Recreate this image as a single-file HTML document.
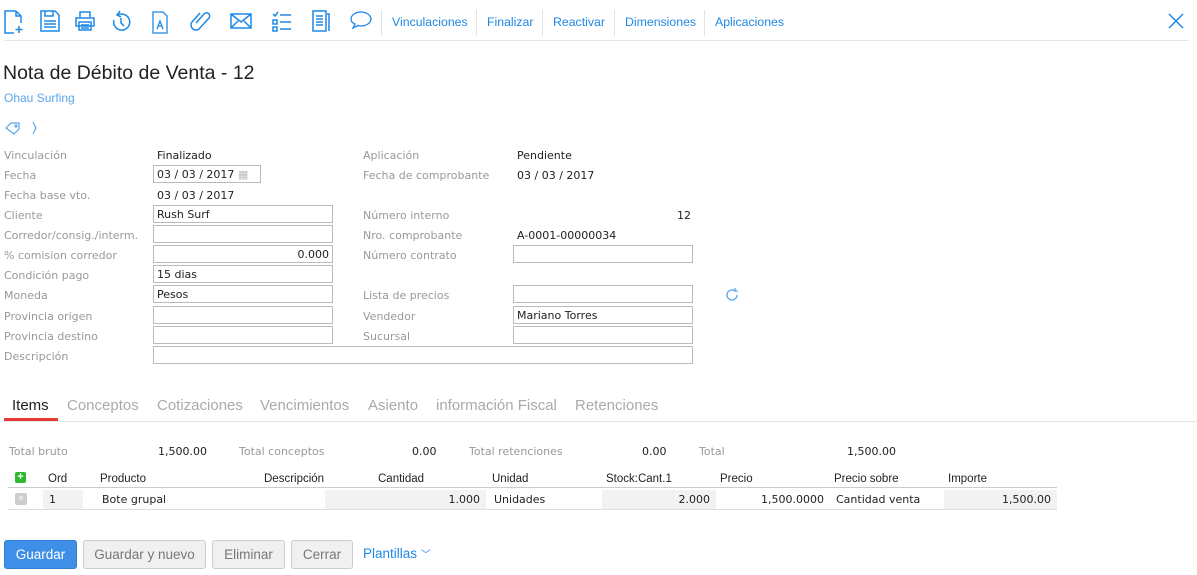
<!DOCTYPE html>
<html><head><meta charset="utf-8"><style>
body{margin:0;width:1197px;height:575px;background:#fff;position:relative;overflow:hidden;font-family:"Liberation Sans",sans-serif}
.a{position:absolute;white-space:nowrap}
.ic{position:absolute;top:10px}
.tb{position:absolute;top:15px;font-size:12.3px;color:#1e88e5}
.sep{position:absolute;top:10px;width:1px;height:26px;background:#e3e3e3}
.l{position:absolute;font-family:"DejaVu Sans",sans-serif;font-size:11px;color:#999;white-space:nowrap}
.v{position:absolute;font-family:"DejaVu Sans",sans-serif;font-size:11px;color:#222;white-space:nowrap}
.in{position:absolute;border:1px solid #bbb;font-family:"DejaVu Sans",sans-serif;font-size:11px;color:#222;line-height:17px;padding:0 3px;box-sizing:border-box;width:180px;height:18px}
.tab{position:absolute;top:397px;font-size:15px;color:#aaa}
.th{position:absolute;top:473px;font-size:11.5px;color:#222}
.td{position:absolute;top:490px;height:19px;line-height:19px;font-family:"DejaVu Sans",sans-serif;font-size:11px;color:#222;box-sizing:border-box;padding:0 6px}
.btn{position:absolute;top:540px;height:29px;line-height:27px;box-sizing:border-box;border:1px solid #ccc;border-radius:3px;background:#f0f0f0;color:#777;font-size:13.5px;text-align:center}
</style></head><body>
<svg class="ic" style="left:4px" width="20" height="24" viewBox="0 0 20 24" fill="none" stroke="#1e88e5" stroke-width="1.5"><path d="M12 1H1v22h9M12 1l5 5v7M12 1v5h5"/><path d="M15 16v7M11.5 19.5h7"/></svg>
<svg class="ic" style="left:40px" width="20" height="22" viewBox="0 0 20 22" fill="none" stroke="#1e88e5" stroke-width="1.5"><path d="M1 1h14l4 4v16H1z"/><path d="M5 1v5h8V1M4 11h12M4 14h12M4 17h12"/></svg>
<svg class="ic" style="left:75px" width="20" height="22" viewBox="0 0 20 22" fill="none" stroke="#1e88e5" stroke-width="1.5"><path d="M5 7V2h10v5M1 8h18v8H1zM4 12h12v8H4zM6 15h8M6 18h8"/></svg>
<svg class="ic" style="left:111px" width="20" height="22" viewBox="0 0 20 22" fill="none" stroke="#1e88e5" stroke-width="1.5"><path d="M7 5a8 8 0 1 1-4 5"/><path d="M9 1L6 5l4 2M10 8v5l3 3"/></svg>
<svg class="ic" style="left:152px" width="16" height="24" viewBox="0 0 16 24" fill="none" stroke="#1e88e5" stroke-width="1.3"><path d="M1 2h10l4 4v17H1z"/><path d="M5 19l3-8 3 8M6 16h4"/></svg>
<svg class="ic" style="left:190px" width="22" height="22" viewBox="0 0 22 22" fill="none" stroke="#1e88e5" stroke-width="1.5"><path d="M6 13l8-9a3 3 0 0 1 5 4l-10 11a5 5 0 0 1-7-7l8-9"/></svg>
<svg class="ic" style="left:230px;top:13px" width="22" height="16" viewBox="0 0 22 16" fill="none" stroke="#1e88e5" stroke-width="1.5"><path d="M1 1h20v14H1zM1 1l10 8 10-8M1 15l7-7M21 15l-7-7"/></svg>
<svg class="ic" style="left:272px" width="20" height="22" viewBox="0 0 20 22" fill="none" stroke="#1e88e5" stroke-width="1.5"><path d="M1 4l2 2 3-4M1 10h4v4H1zM1 17h4v4H1zM8 5h11M8 12h11M8 19h11"/></svg>
<svg class="ic" style="left:312px" width="18" height="22" viewBox="0 0 18 22" fill="none" stroke="#1e88e5" stroke-width="1.5"><path d="M1 1h13v20H1z"/><path d="M4 6h7M4 9h7M4 12h7M4 15h7" /><path d="M15 4h2v17" /></svg>
<svg class="ic" style="left:350px" width="22" height="20" viewBox="0 0 22 20" fill="none" stroke="#1e88e5" stroke-width="1.3"><path d="M11 2c5 0 10 3 10 7s-5 7-10 7c-1 0-2 0-3-.5L3 18l2-4C2 13 1 11 1 9c0-4 5-7 10-7z"/></svg>
<div class="sep" style="left:381px"></div>
<div class="tb" style="left:392px">Vinculaciones</div>
<div class="sep" style="left:476px"></div>
<div class="tb" style="left:487px">Finalizar</div>
<div class="sep" style="left:542px"></div>
<div class="tb" style="left:553px">Reactivar</div>
<div class="sep" style="left:614px"></div>
<div class="tb" style="left:625px">Dimensiones</div>
<div class="sep" style="left:704px"></div>
<div class="tb" style="left:715px">Aplicaciones</div>
<svg class="a" style="left:1168px;top:13px" width="16" height="16" viewBox="0 0 16 16" stroke="#1e88e5" stroke-width="1.5"><path d="M1 1l14 14M15 1L1 15"/></svg>
<div class="a" style="left:4px;top:40px;width:1185px;height:1px;background:#e5e5e5"></div>
<div class="a" style="left:3px;top:62px;font-size:19.5px;color:#222">Nota de Débito de Venta - 12</div>
<div class="a" style="left:4px;top:91px;font-size:12px;color:#5aa6ea">Ohau Surfing</div>
<svg class="a" style="left:5px;top:120px" width="34" height="15" viewBox="0 0 34 15" fill="none" stroke="#5aa6ea" stroke-width="1.2"><path d="M1 8l5-5h8v6l-5 5z"/><circle cx="11" cy="6" r="1"/><path d="M28 2l3 6-3 6"/></svg>

<div class="l" style="left:4px;top:149px">Vinculación</div><div class="v" style="left:157px;top:149px">Finalizado</div>
<div class="l" style="left:4px;top:169px">Fecha</div><div class="in" style="left:153px;top:165px;width:108px">03 / 03 / 2017 <span style="color:#bbb">▦</span></div>
<div class="l" style="left:4px;top:189px">Fecha base vto.</div><div class="v" style="left:157px;top:189px">03 / 03 / 2017</div>
<div class="l" style="left:4px;top:209px">Cliente</div><div class="in" style="left:153px;top:205px">Rush Surf</div>
<div class="l" style="left:4px;top:229px">Corredor/consig./interm.</div><div class="in" style="left:153px;top:225px"></div>
<div class="l" style="left:4px;top:249px">% comision corredor</div><div class="in" style="left:153px;top:245px;text-align:right">0.000</div>
<div class="l" style="left:4px;top:269px">Condición pago</div><div class="in" style="left:153px;top:265px">15 dias</div>
<div class="l" style="left:4px;top:289px">Moneda</div><div class="in" style="left:153px;top:285px">Pesos</div>
<div class="l" style="left:4px;top:310px">Provincia origen</div><div class="in" style="left:153px;top:306px"></div>
<div class="l" style="left:4px;top:330px">Provincia destino</div><div class="in" style="left:153px;top:326px"></div>
<div class="l" style="left:4px;top:350px">Descripción</div><div class="in" style="left:153px;top:346px;width:540px"></div>

<div class="l" style="left:363px;top:149px">Aplicación</div><div class="v" style="left:517px;top:149px">Pendiente</div>
<div class="l" style="left:363px;top:169px">Fecha de comprobante</div><div class="v" style="left:517px;top:169px">03 / 03 / 2017</div>
<div class="l" style="left:363px;top:209px">Número interno</div><div class="v" style="left:677px;top:209px">12</div>
<div class="l" style="left:363px;top:229px">Nro. comprobante</div><div class="v" style="left:517px;top:229px">A-0001-00000034</div>
<div class="l" style="left:363px;top:249px">Número contrato</div><div class="in" style="left:513px;top:245px"></div>
<div class="l" style="left:363px;top:289px">Lista de precios</div><div class="in" style="left:513px;top:285px"></div>
<svg class="a" style="left:725px;top:288px" width="14" height="14" viewBox="0 0 14 14" fill="none" stroke="#5aa6ea" stroke-width="1.3"><path d="M12 7a5 5 0 1 1-2-4M10 0v3h3"/></svg>
<div class="l" style="left:363px;top:310px">Vendedor</div><div class="in" style="left:513px;top:306px">Mariano Torres</div>
<div class="l" style="left:363px;top:330px">Sucursal</div><div class="in" style="left:513px;top:326px"></div>

<div class="tab" style="left:12px;color:#222">Items</div>
<div class="a" style="left:4px;top:418px;width:54px;height:3px;background:#e53935"></div>
<div class="a" style="left:4px;top:421px;width:1193px;height:1px;background:#e5e5e5"></div>
<div class="tab" style="left:67px">Conceptos</div>
<div class="tab" style="left:157px">Cotizaciones</div>
<div class="tab" style="left:260px">Vencimientos</div>
<div class="tab" style="left:368px">Asiento</div>
<div class="tab" style="left:436px">información Fiscal</div>
<div class="tab" style="left:575px">Retenciones</div>

<div class="l" style="left:9px;top:445px">Total bruto</div><div class="v" style="left:158px;top:445px">1,500.00</div>
<div class="l" style="left:239px;top:445px">Total conceptos</div><div class="v" style="left:412px;top:445px">0.00</div>
<div class="l" style="left:469px;top:445px">Total retenciones</div><div class="v" style="left:642px;top:445px">0.00</div>
<div class="l" style="left:699px;top:445px">Total</div><div class="v" style="left:847px;top:445px">1,500.00</div>

<div class="a" style="left:15px;top:472px;width:11px;height:11px;background:#2eb82e;border-radius:2px;color:#fff;font-size:11px;line-height:11px;text-align:center;font-weight:bold">+</div>
<div class="th" style="left:48px">Ord</div><div class="th" style="left:100px">Producto</div><div class="th" style="left:264px">Descripción</div><div class="th" style="left:378px">Cantidad</div><div class="th" style="left:492px">Unidad</div><div class="th" style="left:606px">Stock:Cant.1</div><div class="th" style="left:720px">Precio</div><div class="th" style="left:834px">Precio sobre</div><div class="th" style="left:948px">Importe</div>
<div class="a" style="left:8px;top:487px;width:1049px;height:1px;background:#ccc"></div>
<div class="a" style="left:8px;top:509px;width:1049px;height:1px;background:#ddd"></div>
<div class="a" style="left:15px;top:493px;width:12px;height:12px;background:#ccc;border-radius:2px;color:#fff;font-size:10px;line-height:12px;text-align:center">×</div>
<div class="td" style="left:43px;width:40px;background:#f2f2f2">1</div>
<div class="td" style="left:96px;width:230px">Bote grupal</div>
<div class="td" style="left:325px;width:161px;background:#f2f2f2;text-align:right">1.000</div>
<div class="td" style="left:488px;width:114px">Unidades</div>
<div class="td" style="left:602px;width:114px;background:#f2f2f2;text-align:right">2.000</div>
<div class="td" style="left:716px;width:114px;text-align:right">1,500.0000</div>
<div class="td" style="left:830px;width:114px">Cantidad venta</div>
<div class="td" style="left:944px;width:113px;background:#f2f2f2;text-align:right">1,500.00</div>

<div class="btn" style="left:4px;width:73px;background:#3d8fe8;border-color:#2f7fd8;color:#fff">Guardar</div>
<div class="btn" style="left:83px;width:123px">Guardar y nuevo</div>
<div class="btn" style="left:212px;width:73px">Eliminar</div>
<div class="btn" style="left:291px;width:62px">Cerrar</div>
<div class="a" style="left:363px;top:546px;font-size:13.5px;color:#1e88e5">Plantillas <span style="font-size:10px">﹀</span></div>
</body></html>
